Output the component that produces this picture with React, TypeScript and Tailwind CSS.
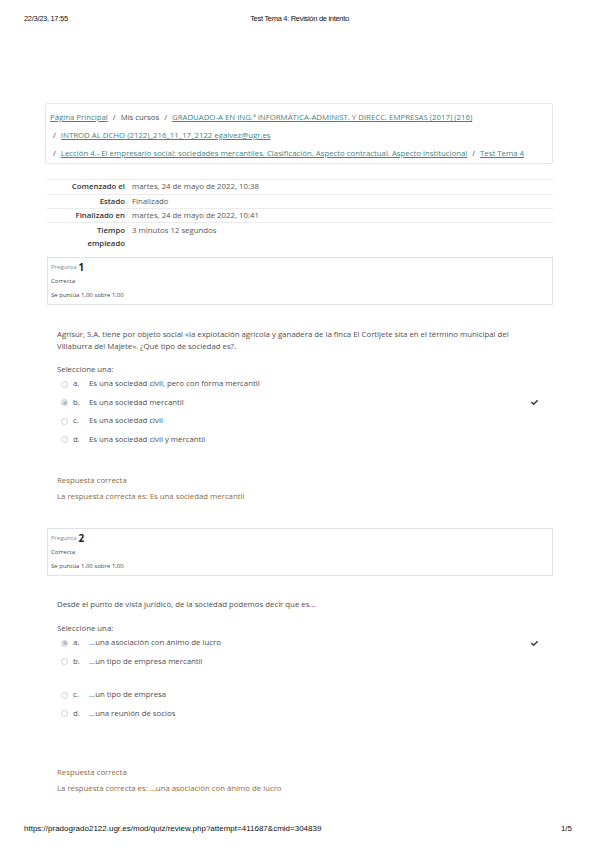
import { FaCheck } from "react-icons/fa";

const sans = "font-['Open_Sans','Noto_Sans',sans-serif]";
const arial = "font-['Liberation_Sans',Arial,sans-serif]";

const summary = [
  { label: "Comenzado el", value: "martes, 24 de mayo de 2022, 10:38", h: "h-[15px]" },
  { label: "Estado", value: "Finalizado", h: "h-[14px]" },
  { label: "Finalizado en", value: "martes, 24 de mayo de 2022, 10:41", h: "h-[14px]" },
];

type Option = { letter: string; text: string; checked?: boolean; gapBefore?: boolean };

const q1: Option[] = [
  { letter: "a.", text: "Es una sociedad civil, pero con forma mercantil" },
  { letter: "b.", text: "Es una sociedad mercantil", checked: true },
  { letter: "c.", text: "Es una sociedad civil" },
  { letter: "d.", text: "Es una sociedad civil y mercantil" },
];

const q2: Option[] = [
  { letter: "a.", text: "...una asociación con ánimo de lucro", checked: true },
  { letter: "b.", text: "...un tipo de empresa mercantil" },
  { letter: "c.", text: "...un tipo de empresa", gapBefore: true },
  { letter: "d.", text: "...una reunión de socios" },
];

function Crumb({ children }: { children: string }) {
  return <a className="text-[#3f8580] underline underline-offset-1">{children}</a>;
}

function Sep() {
  return <span className="mx-[5px] text-[#444]">/</span>;
}

function InfoBox({ num }: { num: number }) {
  return (
    <div className="border border-[#dfe3e7] pt-[2px] pb-[2px] pl-[3px] text-[6px] text-[#444]">
      <div className="h-[14px] flex items-center">
        <span className="text-[#888]">Pregunta</span>
        <span className="ml-[2px] text-[10px] font-bold text-[#222]">{num}</span>
      </div>
      <div className="h-[14px] flex items-center">Correcta</div>
      <div className="h-[14px] flex items-center">Se puntúa 1,00 sobre 1,00</div>
    </div>
  );
}

function Options({ items }: { items: Option[] }) {
  return (
    <div>
      {items.map((o) => (
        <div
          key={o.letter}
          className={`h-[18.5px] flex items-center pl-[4px] pr-[4px] ${o.gapBefore ? "mt-[15px]" : ""}`}
        >
          <span
            className={`w-[7px] h-[7px] rounded-full border border-[#cfcfcf] flex items-center justify-center ${o.checked ? "bg-[#eee]" : ""}`}
          >
            {o.checked && <span className="w-[4px] h-[4px] rounded-full bg-[#bbb]" />}
          </span>
          <span className="ml-[5px] w-[16px]">{o.letter}</span>
          <span>{o.text}</span>
          {o.checked && <FaCheck className="ml-auto text-[#333]" size={7} />}
        </div>
      ))}
    </div>
  );
}

function Feedback({ answer }: { answer: string }) {
  return (
    <div className="text-[#8c6a3d] leading-[16px]">
      <div>Respuesta correcta</div>
      <div>La respuesta correcta es: {answer}</div>
    </div>
  );
}

export default function App() {
  return (
    <div className={`w-[599px] h-[848px] bg-white text-[#4d4d4d] ${sans}`}>
      <div className={`grid grid-cols-[1fr_auto_1fr] px-[24px] pt-[14px] h-[38px] text-[7.5px] leading-[10px] tracking-[-0.3px] text-[#111] ${arial}`}>
        <span>22/3/23, 17:55</span>
        <span>Test Tema 4: Revisión de intento</span>
        <span />
      </div>

      <div className="ml-[47px] w-[506px] text-[7.8px]">
        <div className="mt-[65px] -ml-[2px] border border-[#e6e6e6] rounded-[2px] pt-[4px] pb-[1px] pl-[4px] leading-[18px]">
          <div>
            <Crumb>Página Principal</Crumb>
            <Sep />
            <span>Mis cursos</span>
            <Sep />
            <Crumb>GRADUADO-A EN ING.ª INFORMÁTICA-ADMINIST. Y DIRECC. EMPRESAS (2017) (216)</Crumb>
          </div>
          <div className="pl-[3px]">
            <span className="mr-[5px]">/</span>
            <Crumb>INTROD AL DCHO (2122)_216_11_17_2122 egalvez@ugr.es</Crumb>
          </div>
          <div className="pl-[3px]">
            <span className="mr-[5px]">/</span>
            <Crumb>
              Lección 4.- El empresario social: sociedades mercantiles. Clasificación. Aspecto contractual. Aspecto institucional
            </Crumb>
            <Sep />
            <Crumb>Test Tema 4</Crumb>
          </div>
        </div>

        <div className="mt-[15px]">
          {summary.map((r) => (
            <div key={r.label} className={`${r.h} flex items-center border-t border-[#ececec]`}>
              <span className="w-[78px] text-right font-semibold text-[#333]">{r.label}</span>
              <span className="ml-[7px] text-[#555]">{r.value}</span>
            </div>
          ))}
          <div className="flex border-t border-[#ececec] pt-[1px] leading-[13px] h-[27px]">
            <span className="w-[78px] text-right font-semibold text-[#333]">
              Tiempo
              <br />
              empleado
            </span>
            <span className="ml-[7px] text-[#555]">3 minutos 12 segundos</span>
          </div>
        </div>

        <div className="mt-[8px]">
          <InfoBox num={1} />
        </div>

        <div className="ml-[10px] w-[485px]">
          <p className="mt-[23px] leading-[12px]">
            Agrisur, S.A. tiene por objeto social «la explotación agrícola y ganadera de la finca El Cortijete sita en el término municipal del Villaburra del Majete». ¿Qué tipo de sociedad es?.
          </p>
          <div className="mt-[11px] leading-[12px]">Seleccione una:</div>
          <Options items={q1} />
          <div className="mt-[23px]">
            <Feedback answer="Es una sociedad mercantil" />
          </div>
        </div>

        <div className="mt-[24px]">
          <InfoBox num={2} />
        </div>

        <div className="ml-[10px] w-[485px]">
          <p className="mt-[22px] leading-[12px]">
            Desde el punto de vista jurídico, de la sociedad podemos decir que es...
          </p>
          <div className="mt-[12px] leading-[12px]">Seleccione una:</div>
          <Options items={q2} />
          <div className="mt-[41px]">
            <Feedback answer="...una asociación con ánimo de lucro" />
          </div>
        </div>
      </div>

      <div className={`mt-[28px] flex justify-between pl-[24px] pr-[27px] text-[8px] leading-[10px] text-[#111] ${arial}`}>
        <span>https://pradogrado2122.ugr.es/mod/quiz/review.php?attempt=411687&amp;cmid=304839</span>
        <span>1/5</span>
      </div>
    </div>
  );
}
